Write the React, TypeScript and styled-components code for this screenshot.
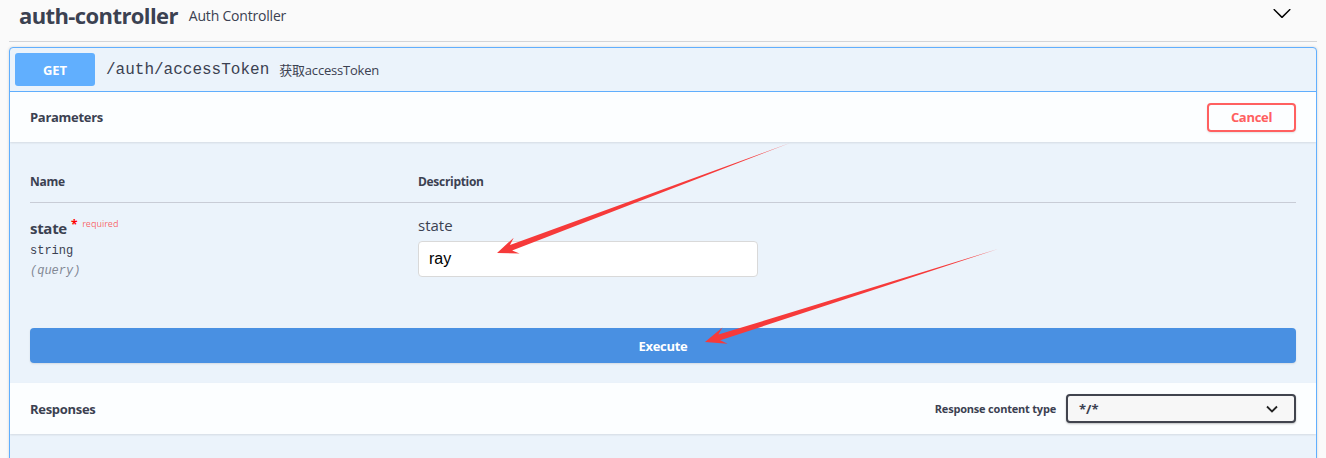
import React from "react";
import styled, { createGlobalStyle } from "styled-components";

const GlobalStyle = createGlobalStyle`
  body {
    margin: 0;
    background: #fafafa;
    font-family: "Open Sans", "Noto Sans", sans-serif;
    color: #3b4151;
  }
`;

const Page = styled.div`
  position: relative;
  width: 1326px;
  height: 458px;
  overflow: hidden;
  padding: 0 9px;
  box-sizing: border-box;
`;

const TagHeader = styled.div`
  display: flex;
  align-items: center;
  height: 41px;
  padding: 0 24px 0 10px;
  border-bottom: 1px solid #d4d5d8;
`;

const TagName = styled.span`
  font-size: 22px;
  font-weight: 700;
  letter-spacing: -0.6px;
  color: #3b4151;
  margin-top: -12px;
`;

const TagDesc = styled.span`
  font-size: 14px;
  letter-spacing: -0.2px;
  color: #3b4151;
  margin-left: 11px;
  margin-top: -11px;
  flex: 1;
`;

const Chevron = styled.svg`
  width: 20px;
  height: 20px;
  margin-top: -15px;
  margin-right: 1px;
`;

const OpBlock = styled.div`
  margin-top: 5px;
  border: 1px solid #61affe;
  border-radius: 4px;
  background: #ebf3fb;
  box-shadow: 0 0 3px rgba(0, 0, 0, 0.15);
  overflow: hidden;
`;

const Summary = styled.div`
  display: flex;
  align-items: center;
  padding: 5px;
  border-bottom: 1px solid #61affe;
`;

const Method = styled.span`
  display: flex;
  align-items: center;
  justify-content: center;
  width: 80px;
  height: 33px;
  border-radius: 3px;
  background: #61affe;
  color: #fff;
  font-size: 13px;
  font-weight: 700;
`;

const Path = styled.span`
  font-family: "Liberation Mono", monospace;
  font-size: 16px;
  color: #3b4151;
  margin-left: 11px;
`;

const Summ = styled.span`
  font-family: "Open Sans", "Noto Sans CJK SC", sans-serif;
  font-size: 13px;
  letter-spacing: -0.2px;
  color: #3b4151;
  margin-left: 10px;
`;

const SectionHeader = styled.div<{ h: number }>`
  display: flex;
  align-items: center;
  justify-content: space-between;
  height: ${(p) => p.h}px;
  padding: 0 20px;
  background: rgba(255, 255, 255, 0.85);
  box-shadow: 0 1px 2px rgba(0, 0, 0, 0.1);
`;

const SectionTitle = styled.span`
  font-size: 13px;
  font-weight: 700;
  letter-spacing: -0.3px;
  color: #3b4151;
`;

const CancelButton = styled.button`
  width: 89px;
  height: 29px;
  border: 2px solid #ff6060;
  border-radius: 4px;
  background: transparent;
  color: #ff6060;
  font-family: "Open Sans", sans-serif;
  font-size: 13px;
  font-weight: 700;
  letter-spacing: -0.3px;
  box-shadow: 0 1px 2px rgba(0, 0, 0, 0.1);
`;

const TableWrap = styled.div`
  padding: 20px 20px 0;
`;

const HeadRow = styled.div`
  display: grid;
  grid-template-columns: 388px 1fr;
  padding: 12px 0;
  border-bottom: 1px solid #c8ccd6;
`;

const HeadCell = styled.span`
  font-size: 12px;
  font-weight: 700;
  letter-spacing: -0.3px;
  line-height: 16px;
  color: #3b4151;
`;

const ParamRow = styled.div`
  display: grid;
  grid-template-columns: 388px 1fr;
  padding: 15px 0 10px;
`;

const NameCol = styled.div`
  display: flex;
  flex-direction: column;
`;

const ParamName = styled.div`
  display: flex;
  align-items: flex-start;
  font-size: 15px;
  font-weight: 700;
  letter-spacing: -0.3px;
  line-height: 20px;
  color: #3b4151;
`;

const Star = styled.span`
  color: red;
  font-size: 12px;
  margin-left: 4px;
  line-height: 14px;
`;

const Required = styled.span`
  font-size: 9px;
  font-weight: 400;
  letter-spacing: 0;
  color: rgba(255, 0, 0, 0.6);
  margin-left: 5px;
  line-height: 12px;
`;

const Mono = styled.div<{ mt: number; italic?: boolean }>`
  font-family: "Liberation Mono", monospace;
  font-size: 12px;
  line-height: 20px;
  color: #3b4151;
  margin-top: ${(p) => p.mt}px;
  font-style: ${(p) => (p.italic ? "italic" : "normal")};
  opacity: ${(p) => (p.italic ? 0.6 : 1)};
`;

const DescCol = styled.div`
  display: flex;
  flex-direction: column;
`;

const DescText = styled.div`
  font-size: 15px;
  line-height: 20px;
  color: #3b4151;
  margin-top: -3px;
`;

const Input = styled.input`
  width: 340px;
  height: 36px;
  margin-top: 6px;
  box-sizing: border-box;
  border: 1px solid #d9d9d9;
  border-radius: 4px;
  background: #fff;
  padding: 0 10px;
  font-family: "Liberation Sans", Arial, sans-serif;
  font-size: 16px;
  color: #000;
  outline: none;
`;

const ExecuteWrap = styled.div`
  padding: 37px 20px 20px;
`;

const ExecuteButton = styled.button`
  display: block;
  width: 100%;
  height: 35px;
  border: none;
  border-radius: 4px;
  background: #4990e2;
  color: #fff;
  font-family: "Open Sans", sans-serif;
  font-size: 13px;
  font-weight: 700;
  letter-spacing: -0.3px;
  box-shadow: 0 1px 2px rgba(0, 0, 0, 0.1);
`;

const ContentType = styled.div`
  display: flex;
  align-items: center;
  gap: 10px;
`;

const Label = styled.span`
  font-size: 11px;
  font-weight: 700;
  letter-spacing: -0.2px;
  color: #3b4151;
`;

const Select = styled.div`
  display: flex;
  align-items: center;
  justify-content: space-between;
  width: 230px;
  height: 29px;
  box-sizing: border-box;
  padding: 0 16px 0 11px;
  border: 2px solid #41444e;
  border-radius: 4px;
  background: #f7f7f7;
  box-shadow: 0 1px 2px rgba(0, 0, 0, 0.25);
  font-size: 13px;
  font-weight: 700;
  color: #3b4151;
`;

const Spacer = styled.div`
  height: 40px;
`;

const Overlay = styled.svg`
  position: absolute;
  left: 0;
  top: 0;
  pointer-events: none;
`;

type Pt = [number, number];

const arrowPoints = (tail: Pt, tip: Pt): string => {
  const dx = tip[0] - tail[0];
  const dy = tip[1] - tail[1];
  const len = Math.hypot(dx, dy);
  const ux = dx / len;
  const uy = dy / len;
  const nx = -uy;
  const ny = ux;
  const at = (d: number, w: number): Pt => [
    tip[0] - ux * d + nx * w,
    tip[1] - uy * d + ny * w,
  ];
  const pts: Pt[] = [
    tail,
    at(15, 3),
    at(21, 8.5),
    tip,
    at(21, -8.5),
    at(15, -3),
  ];
  return pts.map((p) => p.map((v) => v.toFixed(1)).join(",")).join(" ");
};

const ChevronDown = () => (
  <Chevron viewBox="0 0 20 20">
    <path
      d="M17.418 6.109c.272-.268.709-.268.979 0s.271.701 0 .969l-7.908 7.83c-.27.268-.707.268-.979 0l-7.908-7.83c-.27-.268-.27-.701 0-.969.271-.268.709-.268.979 0L10 13.25l7.418-7.141z"
      fill="#000"
    />
  </Chevron>
);

const App = (): JSX.Element => {
  return (
    <Page>
      <GlobalStyle />
      <TagHeader>
        <TagName>auth-controller</TagName>
        <TagDesc>Auth Controller</TagDesc>
        <ChevronDown />
      </TagHeader>
      <OpBlock>
        <Summary>
          <Method>GET</Method>
          <Path>/auth/accessToken</Path>
          <Summ>获取accessToken</Summ>
        </Summary>
        <SectionHeader h={50}>
          <SectionTitle>Parameters</SectionTitle>
          <CancelButton>Cancel</CancelButton>
        </SectionHeader>
        <TableWrap>
          <HeadRow>
            <HeadCell>Name</HeadCell>
            <HeadCell>Description</HeadCell>
          </HeadRow>
          <ParamRow>
            <NameCol>
              <ParamName>
                state
                <Star>*</Star>
                <Required>required</Required>
              </ParamName>
              <Mono mt={3}>string</Mono>
              <Mono mt={0} italic>
                (query)
              </Mono>
            </NameCol>
            <DescCol>
              <DescText>state</DescText>
              <Input defaultValue="ray" />
            </DescCol>
          </ParamRow>
        </TableWrap>
        <ExecuteWrap>
          <ExecuteButton>Execute</ExecuteButton>
        </ExecuteWrap>
        <SectionHeader h={51}>
          <SectionTitle>Responses</SectionTitle>
          <ContentType>
            <Label>Response content type</Label>
            <Select>
              <span>*/*</span>
              <svg width="12" height="8" viewBox="0 0 12 8">
                <path d="M1 1.5l5 5 5-5" stroke="#222" strokeWidth="1.8" fill="none" />
              </svg>
            </Select>
          </ContentType>
        </SectionHeader>
        <Spacer />
      </OpBlock>
      <Overlay width="1326" height="458">
        <polygon points={arrowPoints([790, 143], [497, 253])} fill="#f63a3a" />
        <polygon points={arrowPoints([998, 249], [705, 342])} fill="#f63a3a" />
      </Overlay>
    </Page>
  );
};

export default App;
